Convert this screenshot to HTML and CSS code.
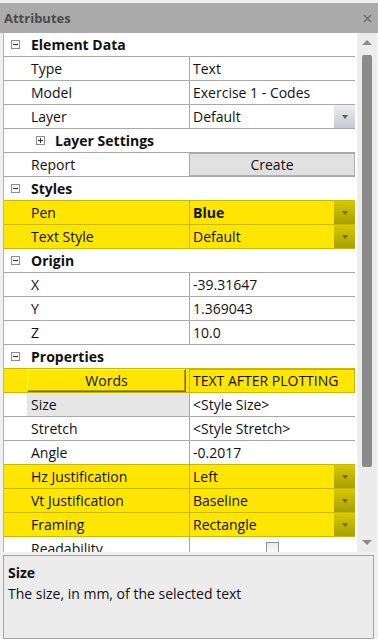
FILE: index.html
```html
<!DOCTYPE html>
<html>
<head>
<meta charset="utf-8">
<link rel="stylesheet" href="styles.css">
</head>
<body>
<div class="win">
  <div class="title">
    <span>Attributes</span>
    <svg class="close" width="9" height="9" viewBox="0 0 9 9"><path d="M1 1L8 8M8 1L1 8" stroke="#6a6a6a" stroke-width="1.4"/></svg>
  </div>
  <div class="body">
    <div class="grid">
      <div class="row hdr"><div class="gut"><span class="tog minus"></span></div><div class="name">Element Data</div></div>
      <div class="row"><div class="gut"></div><div class="name">Type</div><div class="val">Text</div></div>
      <div class="row"><div class="gut"></div><div class="name">Model</div><div class="val">Exercise 1 - Codes</div></div>
      <div class="row"><div class="gut"></div><div class="name">Layer</div><div class="val combo"><span class="vtext">Default</span><span class="dd"></span></div></div>
      <div class="row hdr sub"><div class="gut"></div><div class="name"><span class="tog plus"></span>Layer Settings</div></div>
      <div class="row"><div class="gut"></div><div class="name">Report</div><div class="val btnval"><span class="btn">Create</span></div></div>
      <div class="row hdr hltop"><div class="gut"><span class="tog minus"></span></div><div class="name">Styles</div></div>
      <div class="row hl"><div class="gut"></div><div class="name">Pen</div><div class="val combo"><span class="vtext bold">Blue</span><span class="dd"></span></div></div>
      <div class="row hl"><div class="gut"></div><div class="name">Text Style</div><div class="val combo"><span class="vtext">Default</span><span class="dd"></span></div></div>
      <div class="row hdr"><div class="gut"><span class="tog minus"></span></div><div class="name">Origin</div></div>
      <div class="row"><div class="gut"></div><div class="name">X</div><div class="val">-39.31647</div></div>
      <div class="row"><div class="gut"></div><div class="name">Y</div><div class="val">1.369043</div></div>
      <div class="row"><div class="gut"></div><div class="name">Z</div><div class="val">10.0</div></div>
      <div class="row hdr hltop"><div class="gut"><span class="tog minus"></span></div><div class="name">Properties</div></div>
      <div class="row hl words"><div class="gut"></div><div class="name"><span class="wbtn">Words</span></div><div class="val boxed">TEXT AFTER PLOTTING</div></div>
      <div class="row"><div class="gut"></div><div class="name sel">Size</div><div class="val">&lt;Style Size&gt;</div></div>
      <div class="row"><div class="gut"></div><div class="name">Stretch</div><div class="val">&lt;Style Stretch&gt;</div></div>
      <div class="row hltopline"><div class="gut"></div><div class="name">Angle</div><div class="val">-0.2017</div></div>
      <div class="row hl"><div class="gut"></div><div class="name">Hz Justification</div><div class="val combo"><span class="vtext">Left</span><span class="dd"></span></div></div>
      <div class="row hl"><div class="gut"></div><div class="name">Vt Justification</div><div class="val combo"><span class="vtext">Baseline</span><span class="dd"></span></div></div>
      <div class="row hl"><div class="gut"></div><div class="name">Framing</div><div class="val combo"><span class="vtext">Rectangle</span><span class="dd"></span></div></div>
      <div class="row"><div class="gut"></div><div class="name">Readability</div><div class="val center"><span class="chk"></span></div></div>
    </div>
    <div class="scroll">
      <div class="sbtn up"><span class="tri-up"></span></div>
      <div class="thumb"></div>
      <div class="spacer"></div>
      <div class="sbtn down"><span class="tri-down"></span></div>
    </div>
  </div>
  <div class="desc">
    <div class="desc-title">Size</div>
    <div class="desc-text">The size, in mm, of the selected text</div>
  </div>
</div>
</body>
</html>
```
FILE: styles.css
```css
html, body {
  margin: 0;
  padding: 0;
  background: #f0f0f0;
}
.win {
  width: 378px;
  height: 639px;
  box-sizing: border-box;
  padding-top: 3px;
  font-family: "Open Sans", "Noto Sans", sans-serif;
  font-size: 14px;
  color: #111;
  overflow: hidden;
}
.title {
  height: 30px;
  background: #ababab;
  display: flex;
  align-items: center;
  justify-content: space-between;
  padding: 0 6px 0 4px;
  font-size: 13px;
  font-weight: bold;
  color: #4a4a4a;
}
.close { display: block; margin-top: 1px; }
.body {
  display: flex;
  height: 519px;
  padding-left: 3px;
}
.grid {
  width: 354px;
  box-sizing: border-box;
  border-left: 1px solid #b4b4b4;
  padding-right: 2px;
  background: #fff;
  overflow: hidden;
  flex: none;
}
.row {
  display: flex;
  height: 24px;
  flex: none;
  box-sizing: border-box;
  border-bottom: 1px solid #a8a8a8;
  white-space: nowrap;
}
.gut {
  width: 23px;
  flex: none;
  display: flex;
  align-items: center;
}
.name {
  width: 162px;
  flex: none;
  box-sizing: border-box;
  padding-left: 4px;
  display: flex;
  align-items: center;
  overflow: hidden;
}
.name.sel { background: #e6e6e6; }
.val {
  flex: 1;
  border-left: 1px solid #a8a8a8;
  padding-left: 3px;
  display: flex;
  align-items: center;
  overflow: hidden;
}
.hdr .name {
  width: auto;
  flex: 1;
  font-weight: bold;
  font-size: 14px;
}
.hdr.sub .name { padding-left: 9px; }
.tog {
  width: 9px;
  height: 9px;
  box-sizing: border-box;
  border: 1px solid #8e8e8e;
  background: #fbfbfb;
  position: relative;
  flex: none;
  margin-left: 7px;
}
.hdr.sub .tog { margin-left: 0; margin-right: 10px; }
.tog::before {
  content: "";
  position: absolute;
  left: 1px;
  top: 3px;
  width: 5px;
  height: 1px;
  background: #333;
}
.tog.plus::after {
  content: "";
  position: absolute;
  left: 3px;
  top: 1px;
  width: 1px;
  height: 5px;
  background: #333;
}
.combo { padding-right: 0; }
.vtext { flex: 1; }
.bold { font-weight: bold; }
.dd {
  width: 21px;
  height: 23px;
  flex: none;
  background: linear-gradient(#eeeef1, #c7c7cf);
  display: flex;
  align-items: center;
  justify-content: center;
}
.dd::after {
  content: "";
  border-left: 3px solid transparent;
  border-right: 3px solid transparent;
  border-top: 4px solid #5e5e5e;
}
.btnval { padding-left: 0; }
.btn {
  flex: 1;
  height: 23px;
  box-sizing: border-box;
  background: #e1e1e1;
  border: 1px solid #adadad;
  margin-left: -1px;
  display: flex;
  align-items: center;
  justify-content: center;
}
.hltop { border-bottom-color: #cbb900; }
.hltopline { border-bottom-color: #cbb900; }
.row.hl {
  background: #ffe600;
  border-bottom-color: #cbb900;
}
.row.hl .val { border-left-color: #c4b300; }
.row.hl .dd { background: linear-gradient(#d8c900, #a6a000); }
.row.hl .dd::after { border-top-color: #6d6a1e; }
.words .name { padding-left: 0; }
.wbtn {
  width: 159px;
  height: 23px;
  box-sizing: border-box;
  border: 1px solid;
  border-color: #fff59a #6f6b00 #6f6b00 #fff59a;
  box-shadow: inset -1px -1px 0 #aaa200;
  display: flex;
  align-items: center;
  justify-content: center;
}
.boxed {
  box-shadow: inset 0 1px 0 #c4b300, inset -1px 0 0 #c4b300;
}
.center { justify-content: center; padding-left: 0; }
.chk {
  width: 13px;
  height: 13px;
  box-sizing: border-box;
  border: 1px solid #8f8f8f;
  background: linear-gradient(#e9e9e9, #fdfdfd);
  margin-top: -1px;
}
.scroll {
  width: 18px;
  margin-left: 1px;
  background: #ececec;
  display: flex;
  flex-direction: column;
  align-items: center;
  flex: none;
}
.sbtn {
  height: 18px;
  display: flex;
  align-items: center;
  justify-content: center;
  flex: none;
}
.sbtn.down { height: 20px; }
.tri-up {
  border-left: 5px solid transparent;
  border-right: 5px solid transparent;
  border-bottom: 5px solid #8a8a8a;
}
.tri-down {
  border-left: 5px solid transparent;
  border-right: 5px solid transparent;
  border-top: 5px solid #8a8a8a;
}
.thumb {
  width: 10px;
  height: 412px;
  margin-top: 4px;
  background: #8a8a8a;
  border-radius: 2px;
  flex: none;
}
.spacer { flex: 1; }
.desc {
  margin: 3px 4px 0 3px;
  height: 84px;
  box-sizing: border-box;
  border: 1px solid #a4a4a4;
  background: #ececec;
  padding: 6px 4px 0 4px;
  line-height: 21px;
}
.desc-title { font-weight: bold; }
```
